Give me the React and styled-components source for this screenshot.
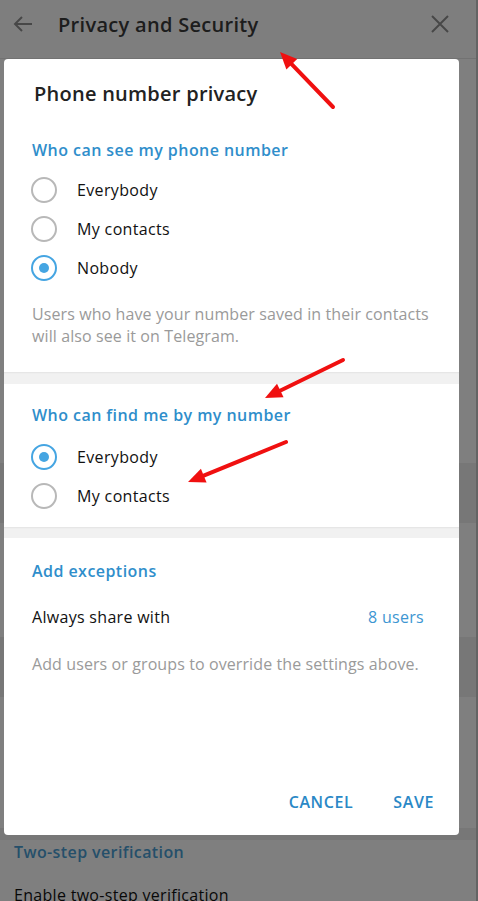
import React from 'react';
import styled, { createGlobalStyle } from 'styled-components';

const GlobalStyle = createGlobalStyle`
  html, body {
    margin: 0;
    padding: 0;
    background: #fff;
    font-family: 'Open Sans', 'Noto Sans', sans-serif;
  }
  *, *:before, *:after {
    box-sizing: border-box;
  }
`

const Screen = styled.div`
  position: relative;
  width: 478px;
  height: 901px;
  overflow: hidden;
  background: #fff;
`

// settings page that sits behind the modal
const Page = styled.div`
  display: flex;
  flex-direction: column;
  height: 100%;
  border-right: 2px solid #c8c8c8;
  & > * {
    flex-shrink: 0;
  }
`

const PageHeader = styled.header`
  display: flex;
  align-items: center;
  height: 59px;
  padding: 0 26px 0 12px;
  border-bottom: 1px solid #e4e4e4;
  background: #fdfdfd;
`

const HeaderTitle = styled.h1`
  flex: 1;
  margin: 0 0 10px 24px;
  font-size: 20px;
  font-weight: 600;
  letter-spacing: 0.3px;
  color: #3a3a3a;
`

const IconBtn = styled.span`
  display: flex;
  margin-bottom: 10px;
  color: #8f8f8f;
`

const PageBand = styled.div`
  height: ${p => p.h}px;
  background: ${p => (p.dark ? '#eeeeee' : '#fff')};
`

const PageSectionTitle = styled.div`
  padding: 1px 14px 0;
  font-size: 16px;
  font-weight: 600;
  letter-spacing: 0.4px;
  color: #4b9fd4;
`

const PageRow = styled.div`
  padding: 21px 14px 0;
  font-size: 16px;
  letter-spacing: 0.3px;
  color: #111;
`

const Overlay = styled.div`
  position: absolute;
  inset: 0;
  background: rgba(0, 0, 0, 0.5);
`

const Dialog = styled.div`
  position: absolute;
  left: 4px;
  top: 59px;
  width: 455px;
  height: 776px;
  display: flex;
  flex-direction: column;
  background: #fff;
  border-radius: 4px;
  overflow: hidden;
`

const DialogTitle = styled.h2`
  margin: 0;
  padding: 22px 30px 0;
  font-size: 20px;
  line-height: 26px;
  font-weight: 600;
  letter-spacing: 0.25px;
  color: #222;
`

const Section = styled.section`
  padding: ${p => p.pad};
`

const SectionTitle = styled.div`
  padding-left: 28px;
  font-size: 16px;
  line-height: 22px;
  font-weight: 600;
  letter-spacing: 0.45px;
  color: #2f8ecb;
`

const RadioList = styled.div`
  margin-top: ${p => p.gap}px;
`

const RadioRow = styled.label`
  display: flex;
  align-items: center;
  height: 39px;
  padding-left: 27px;
  font-size: 16px;
  letter-spacing: 0.35px;
  color: #111;
`

const RadioCircle = styled.span`
  position: relative;
  width: 26px;
  height: 26px;
  margin-right: 20px;
  border-radius: 50%;
  border: 2px solid ${p => (p.checked ? '#45a5e2' : '#b8b8b8')};
  &:after {
    content: '';
    display: ${p => (p.checked ? 'block' : 'none')};
    position: absolute;
    left: 6px;
    top: 6px;
    width: 10px;
    height: 10px;
    border-radius: 50%;
    background: #45a5e2;
  }
`

const Note = styled.p`
  margin: ${p => p.gap}px 0 0;
  padding: 0 20px 0 28px;
  font-size: 16px;
  line-height: 22px;
  letter-spacing: 0.1px;
  color: #9a9a9a;
`

const Divider = styled.div`
  height: ${p => p.h}px;
  background: #f1f1f1;
  box-shadow: inset 0 2px 2px -1px rgba(0, 0, 0, 0.06);
`

const ShareRow = styled.div`
  display: flex;
  justify-content: space-between;
  margin-top: 24px;
  padding: 0 35px 0 28px;
  font-size: 16px;
  line-height: 22px;
  letter-spacing: 0.3px;
  color: #111;
`

const Count = styled.span`
  color: #3d96d2;
`

const Footer = styled.div`
  display: flex;
  justify-content: flex-end;
  gap: 40px;
  margin-top: auto;
  padding: 0 25px 23px 0;
`

const TextButton = styled.button`
  padding: 0;
  border: 0;
  background: none;
  font-family: inherit;
  font-size: 16px;
  line-height: 20px;
  font-weight: 600;
  letter-spacing: 0.6px;
  text-transform: uppercase;
  color: #2a88c6;
`

const Annotations = styled.svg`
  position: absolute;
  left: 0;
  top: 0;
  pointer-events: none;
`

const arrows = [
  { from: [333, 107], to: [280, 52] },
  { from: [343, 360], to: [265, 398] },
  { from: [286, 442], to: [188, 482] },
]

const Arrow = ({ from, to }) => {
  const [x1, y1] = from
  const [x2, y2] = to
  const len = Math.hypot(x2 - x1, y2 - y1)
  const ux = (x2 - x1) / len
  const uy = (y2 - y1) / len
  const hl = 17, hw = 7.5
  const bx = x2 - ux * hl, by = y2 - uy * hl
  const pts = [
    [x2, y2],
    [bx - uy * hw, by + ux * hw],
    [bx + uy * hw, by - ux * hw],
  ].map(p => p.join(',')).join(' ')
  return (
    <g>
      <line x1={x1} y1={y1} x2={bx + ux * 2} y2={by + uy * 2} stroke="#f01010" strokeWidth="4" strokeLinecap="round" />
      <polygon points={pts} fill="#f01010" />
    </g>
  )
}

const Radio = ({ label, checked }) => (
  <RadioRow>
    <RadioCircle checked={checked} />
    {label}
  </RadioRow>
)

const App = () => (
  <Screen>
    <GlobalStyle />
    <Page>
      <PageHeader>
        <IconBtn>
          <svg width="22" height="22" viewBox="0 0 22 22" fill="none" stroke="currentColor" strokeWidth="2">
            <path d="M20 11H3M10 4l-7 7 7 7" />
          </svg>
        </IconBtn>
        <HeaderTitle>Privacy and Security</HeaderTitle>
        <IconBtn>
          <svg width="20" height="20" viewBox="0 0 20 20" fill="none" stroke="currentColor" strokeWidth="2">
            <path d="M2 2l16 16M18 2L2 18" />
          </svg>
        </IconBtn>
      </PageHeader>
      <PageBand h={404} />
      <PageBand h={60} dark />
      <PageBand h={114} />
      <PageBand h={60} dark />
      <PageBand h={131} />
      <PageBand h={12} dark />
      <PageSectionTitle>Two-step verification</PageSectionTitle>
      <PageRow>Enable two-step verification</PageRow>
    </Page>
    <Overlay />
    <Dialog>
      <DialogTitle>Phone number privacy</DialogTitle>
      <Section pad="32px 0 25px">
        <SectionTitle>Who can see my phone number</SectionTitle>
        <RadioList gap={9}>
          <Radio label="Everybody" />
          <Radio label="My contacts" />
          <Radio label="Nobody" checked />
        </RadioList>
        <Note gap={16}>Users who have your number saved in their contacts will also see it on Telegram.</Note>
      </Section>
      <Divider h={12} />
      <Section pad="20px 0 12px">
        <SectionTitle>Who can find me by my number</SectionTitle>
        <RadioList gap={11}>
          <Radio label="Everybody" checked />
          <Radio label="My contacts" />
        </RadioList>
      </Section>
      <Divider h={11} />
      <Section pad="22px 0 0">
        <SectionTitle>Add exceptions</SectionTitle>
        <ShareRow>
          <span>Always share with</span>
          <Count>8 users</Count>
        </ShareRow>
        <Note gap={25}>Add users or groups to override the settings above.</Note>
      </Section>
      <Footer>
        <TextButton>Cancel</TextButton>
        <TextButton>Save</TextButton>
      </Footer>
    </Dialog>
    <Annotations width="478" height="901" viewBox="0 0 478 901">
      {arrows.map((a, i) => <Arrow key={i} {...a} />)}
    </Annotations>
  </Screen>
)

export default App
